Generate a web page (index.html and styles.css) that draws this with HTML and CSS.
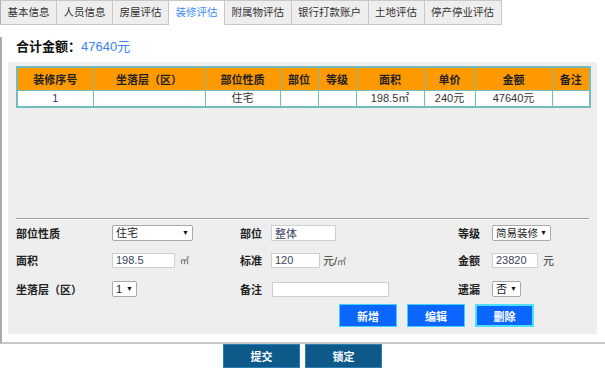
FILE: index.html
```html
<!DOCTYPE html>
<html lang="zh-CN">
<head>
    <meta charset="UTF-8">
    <meta name="viewport" content="width=device-width, initial-scale=1.0">
    <title>装修评估</title>
    <link rel="stylesheet" href="styles.css">
</head>
<body>
    <!-- 选项卡 -->
    <ul class="tabs">
        <li>基本信息</li>
        <li>人员信息</li>
        <li>房屋评估</li>
        <li class="active">装修评估</li>
        <li>附属物评估</li>
        <li>银行打款账户</li>
        <li>土地评估</li>
        <li>停产停业评估</li>
    </ul>

    <div class="frame">
        <div class="total">合计金额：<span class="total-value">47640元</span></div>

        <div class="panel">
            <div class="table-wrap">
                <table class="grid">
                    <colgroup>
                        <col style="width:76px">
                        <col style="width:112px">
                        <col style="width:75px">
                        <col style="width:38px">
                        <col style="width:38px">
                        <col style="width:68px">
                        <col style="width:51px">
                        <col style="width:77px">
                        <col style="width:38px">
                    </colgroup>
                    <tr>
                        <th>装修序号</th>
                        <th>坐落层（区）</th>
                        <th>部位性质</th>
                        <th>部位</th>
                        <th>等级</th>
                        <th>面积</th>
                        <th>单价</th>
                        <th>金额</th>
                        <th>备注</th>
                    </tr>
                    <tr>
                        <td class="num">1</td>
                        <td></td>
                        <td>住宅</td>
                        <td></td>
                        <td></td>
                        <td>198.5㎡</td>
                        <td>240元</td>
                        <td>47640元</td>
                        <td></td>
                    </tr>
                </table>
            </div>

            <div class="form">
                <label class="lbl">部位性质</label>
                <div class="field"><span class="sel sel-type">住宅</span></div>
                <label class="lbl">部位</label>
                <div class="field"><input class="ipt ipt-part" value="整体"></div>
                <label class="lbl">等级</label>
                <div class="field"><span class="sel sel-level">简易装修</span></div>

                <label class="lbl">面积</label>
                <div class="field"><input class="ipt ipt-area" value="198.5"><span class="unit">㎡</span></div>
                <label class="lbl">标准</label>
                <div class="field"><input class="ipt ipt-price" value="120"><span class="unit-text">元/<span class="unit">㎡</span></span></div>
                <label class="lbl">金额</label>
                <div class="field"><input class="ipt ipt-money" value="23820"><span class="unit-text">元</span></div>

                <label class="lbl">坐落层（区）</label>
                <div class="field"><span class="sel sel-floor">1</span></div>
                <label class="lbl">备注</label>
                <div class="field"><input class="ipt ipt-note" value=""></div>
                <label class="lbl">遗漏</label>
                <div class="field"><span class="sel sel-miss">否</span></div>
            </div>

            <div class="actions">
                <button class="btn-blue">新增</button>
                <button class="btn-blue">编辑</button>
                <button class="btn-blue focus">删除</button>
            </div>
        </div>
    </div>

    <div class="bottom">
        <button class="btn-dark">提交</button>
        <button class="btn-dark">锁定</button>
    </div>
</body>
</html>
```

FILE: styles.css
```css
/* 页面基础 */
html, body {
    margin: 0;
    padding: 0;
    background: #fff;
}

body {
    font-family: "Liberation Sans", "Noto Sans CJK SC", sans-serif;
    font-size: 11px;
    color: #333;
    overflow: hidden;
}

/* 选项卡 */
.tabs {
    list-style: none;
    margin: 0;
    padding: 0;
    display: flex;
    height: 25px;
}

.tabs li {
    padding: 0 6.5px;
    font-size: 10.5px;
    line-height: 23px;
    background-color: #eeeeee;
    border-top: 1px solid #c8c8c8;
    border-right: 1px solid #c8c8c8;
    border-bottom: 1px solid #c8c8c8;
    white-space: nowrap;
}

.tabs li:first-child {
    border-left: 1px solid #b0b0b0;
}

.tabs li.active {
    background-color: #fff;
    color: #3d8bff;
    border-bottom-color: #fff;
}

/* 外框 */
.frame {
    border-left: 2px solid #aaa;
    border-bottom: 2px solid #c8c8c8;
}

.total {
    margin-top: 12px;
    padding-left: 14px;
    line-height: 20px;
    font-size: 13px;
    font-weight: bold;
    color: #111;
}

.total-value {
    font-weight: normal;
    color: #3d84f5;
}

.panel {
    margin: 5px 0 8px 6px;
    width: 589px;
    box-sizing: border-box;
    padding: 4px 8px 7px 8px;
    background-color: #eeeeee;
}

/* 表格 */
.table-wrap {
    height: 152px;
    border-bottom: 1px solid #a0a0a0;
    box-shadow: 0 1px 0 #fafafa;
}

.grid {
    border-collapse: collapse;
    width: 573px;
    table-layout: fixed;
    border: 2px solid #73bcbc;
    background: #fff;
}

.grid th,
.grid td {
    border: 1px solid #73bcbc;
    text-align: center;
    padding: 0;
    white-space: nowrap;
}

.grid th {
    height: 22px;
    background-color: #ff9900;
    font-weight: bold;
    color: #222;
}

.grid td {
    height: 15px;
    line-height: 15px;
}

.grid td.num {
    color: #4b2a7a;
}

/* 表单 */
.form {
    display: grid;
    grid-template-columns: 96px 128px 31px 187px 34px 1fr;
    grid-template-rows: 24px 30px 28px;
    padding-top: 2px;
    align-items: center;
}

.lbl {
    font-weight: bold;
    color: #222;
    white-space: nowrap;
}

.field {
    display: flex;
    align-items: center;
}

.ipt {
    box-sizing: border-box;
    height: 15px;
    border: 1px solid #cfcfcf;
    background: #fff;
    padding: 0 0 0 3px;
    font-family: inherit;
    font-size: 11px;
    color: #3a3f5a;
    outline: none;
}

.ipt-part { width: 65px; height: 16px; }
.ipt-area { width: 63px; }
.ipt-price { width: 49px; }
.ipt-money { width: 46px; }
.ipt-note { width: 117px; margin-left: 1px; }

.unit {
    font-size: 9px;
    color: #555;
}

.field > .unit {
    margin-left: 5px;
}

.unit-text {
    margin-left: 3px;
    color: #333;
}

.field .ipt-money + .unit-text {
    margin-left: 5px;
}

/* 下拉框 */
.sel {
    position: relative;
    box-sizing: border-box;
    display: inline-block;
    height: 16px;
    line-height: 14px;
    padding-left: 3px;
    border: 1px solid #a9a9a9;
    border-radius: 2px;
    background: #fff;
    color: #222;
    white-space: nowrap;
}

.sel::after {
    content: "▼";
    position: absolute;
    right: 3px;
    top: 0;
    font-size: 7px;
    color: #111;
}

.sel-type { width: 81px; }
.sel-level { width: 59px; font-size: 10.5px; }
.sel-floor { width: 25px; }
.sel-miss { width: 29px; }

/* 按钮 */
.actions {
    display: flex;
    justify-content: flex-end;
    gap: 10px;
    margin-top: 1px;
    padding-right: 55px;
}

.btn-blue {
    box-sizing: border-box;
    width: 58px;
    height: 23px;
    border: 1px solid #3fd2ff;
    background-color: #0a66ff;
    color: #fff;
    font-family: inherit;
    font-size: 11px;
    font-weight: bold;
    padding: 0;
    cursor: pointer;
}

.btn-blue.focus {
    width: 59px;
    border: 2px solid #4fe0ff;
}

.bottom {
    display: flex;
    justify-content: center;
    gap: 5px;
}

.btn-dark {
    box-sizing: border-box;
    width: 77px;
    height: 24px;
    border: 1px solid #2a7fb0;
    background-color: #0d5a8a;
    color: #fff;
    font-family: inherit;
    font-size: 11px;
    font-weight: bold;
    padding: 0;
    cursor: pointer;
}
```
